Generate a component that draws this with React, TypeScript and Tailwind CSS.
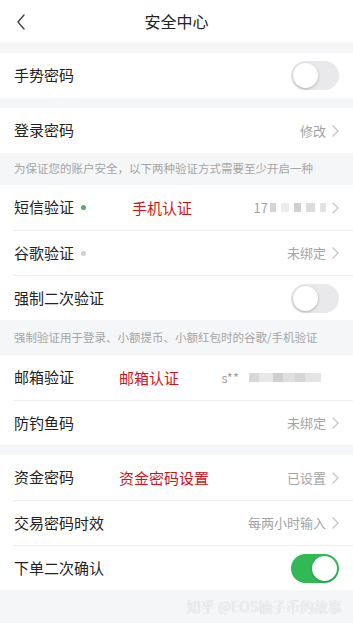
const font = { fontFamily: '"Noto Sans CJK SC", "Noto Sans", sans-serif' };

function Chevron() {
  return (
    <svg width="7" height="12" viewBox="0 0 7 12" className="ml-[6px] shrink-0">
      <path d="M1 1l5 5-5 5" fill="none" stroke="#c4c4c4" strokeWidth="1.2" strokeLinecap="round" strokeLinejoin="round" />
    </svg>
  );
}

function Toggle({ on }: { on?: boolean }) {
  return on ? (
    <div className="w-[48px] h-[29px] rounded-full bg-[#30b955] flex items-center justify-end px-[2px]">
      <div className="w-[25px] h-[25px] rounded-full bg-white shadow-[0_1px_2px_rgba(0,0,0,0.2)]" />
    </div>
  ) : (
    <div className="w-[48px] h-[29px] rounded-full bg-[#e9e9eb] flex items-center px-[2px]">
      <div className="w-[25px] h-[25px] rounded-full bg-white shadow-[0_1px_3px_rgba(0,0,0,0.25)]" />
    </div>
  );
}

function Row({
  label,
  dot,
  right,
  note,
  divider,
}: {
  label: string;
  dot?: 'green' | 'gray';
  right?: React.ReactNode;
  note?: { text: string; left: number };
  divider?: boolean;
}) {
  return (
    <div className="relative">
      {divider && <div className="ml-[13px] h-px bg-[#eeeeee]" />}
      <div className={`${divider ? 'h-[44px]' : 'h-[45px]'} flex items-center pl-[14px] pr-[14px]`}>
        <span className="text-[15px] text-[#222]">{label}</span>
        {dot && (
          <span
            className={`ml-[7px] w-[5px] h-[5px] rounded-full ${dot === 'green' ? 'bg-[#4caf72]' : 'bg-[#cfcfcf]'}`}
          />
        )}
        <div className="flex-1" />
        {right}
      </div>
      {note && (
        <span
          className="absolute top-1/2 -translate-y-1/2 text-[15px] text-[#d0121b]"
          style={{ left: note.left }}
        >
          {note.text}
        </span>
      )}
    </div>
  );
}

function Value({ text }: { text: string }) {
  return (
    <div className="flex items-center">
      <span className="text-[13px] text-[#a3a3a3]">{text}</span>
      <Chevron />
    </div>
  );
}

function Blur({ w, c }: { w: number; c: string }) {
  return <span className="inline-block h-[9px]" style={{ width: w, background: c }} />;
}

export default function App() {
  return (
    <div className="w-[353px] h-[623px] bg-[#f5f6f8] flex flex-col overflow-hidden" style={font}>
      {/* Header */}
      <div className="relative h-[42px] bg-white flex items-center justify-center">
        <svg width="10" height="16" viewBox="0 0 10 16" className="absolute left-[16px] top-[14px]">
          <path d="M8 1L2 8l6 7" fill="none" stroke="#444" strokeWidth="1.4" strokeLinecap="round" strokeLinejoin="round" />
        </svg>
        <span className="text-[16px] text-[#222]">安全中心</span>
      </div>

      <div className="h-[11px]" />
      <div className="bg-white">
        <Row label="手势密码" right={<Toggle />} />
      </div>

      <div className="h-[10px]" />
      <div className="bg-white">
        <Row label="登录密码" right={<Value text="修改" />} />
      </div>

      <div className="h-[32px] flex items-center pl-[14px] text-[11.5px] text-[#a5a5a5]">
        为保证您的账户安全，以下两种验证方式需要至少开启一种
      </div>
      <div className="bg-white">
        <Row
          label="短信验证"
          dot="green"
          note={{ text: '手机认证', left: 132 }}
          right={
            <div className="flex items-center">
              <span className="text-[13px] text-[#a3a3a3]">17</span>
              <span className="flex items-center gap-[5px] ml-[2px]">
                <Blur w={6} c="#d4d4d4" />
                <Blur w={8} c="#ececec" />
                <Blur w={7} c="#d0d0d0" />
                <Blur w={9} c="#dcdcdc" />
                <Blur w={6} c="#e2e2e2" />
              </span>
              <Chevron />
            </div>
          }
        />
        <Row label="谷歌验证" dot="gray" divider right={<Value text="未绑定" />} />
        <Row label="强制二次验证" divider right={<Toggle />} />
      </div>

      <div className="h-[35px] flex items-center pl-[14px] text-[11.5px] text-[#a5a5a5]">
        强制验证用于登录、小额提币、小额红包时的谷歌/手机验证
      </div>
      <div className="bg-white">
        <Row
          label="邮箱验证"
          note={{ text: '邮箱认证', left: 119 }}
          right={
            <div className="flex items-center mr-[18px]">
              <span className="text-[13px] text-[#a3a3a3]">s**</span>
              <span className="flex items-center ml-[10px]">
                <Blur w={10} c="#d8d8d8" />
                <Blur w={14} c="#e8e8e8" />
                <Blur w={10} c="#cfcfcf" />
                <Blur w={12} c="#e0e0e0" />
                <Blur w={10} c="#d6d6d6" />
                <Blur w={16} c="#e4e4e4" />
              </span>
            </div>
          }
        />
        <Row label="防钓鱼码" divider right={<Value text="未绑定" />} />
      </div>

      <div className="h-[10px]" />
      <div className="bg-white">
        <Row label="资金密码" note={{ text: '资金密码设置', left: 119 }} right={<Value text="已设置" />} />
        <Row label="交易密码时效" divider right={<Value text="每两小时输入" />} />
        <Row label="下单二次确认" divider right={<Toggle on />} />
      </div>

      <div className="flex-1 flex items-center justify-end pr-[11px]">
        <span className="text-[14px] text-[#f2f2f2] [text-shadow:0_0_1px_rgba(0,0,0,0.22)]">知乎 @EOS柚子币的故事</span>
      </div>
    </div>
  );
}
